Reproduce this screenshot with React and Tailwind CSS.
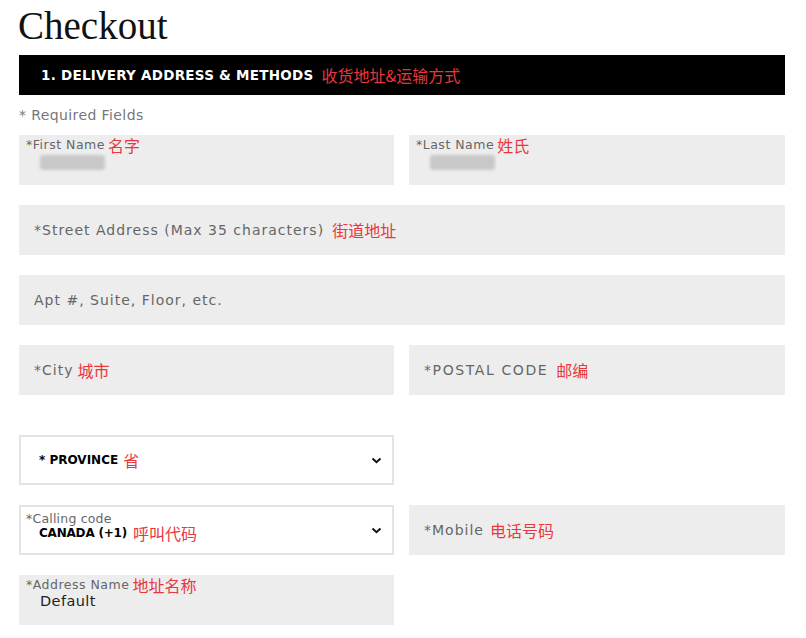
import React from "react";

const sans = "font-['DejaVu_Sans','Noto_Sans_CJK_SC',sans-serif]";

function Cn({ children, className = "" }) {
  return (
    <span className={`text-[#e8383d] text-[16px] font-normal tracking-normal font-['Noto_Sans_CJK_SC',sans-serif] ${className}`}>
      {children}
    </span>
  );
}

function Chevron() {
  return (
    <svg width="11" height="7" viewBox="0 0 11 7" className="shrink-0">
      <path d="M1.5 1.5 L5.5 5.2 L9.5 1.5" fill="none" stroke="#111" strokeWidth="2" />
    </svg>
  );
}

function Field({ children, className = "" }) {
  return (
    <div className={`h-[50px] bg-[#ededed] flex items-center pl-[15px] text-[14px] text-[#666] tracking-[1px] ${className}`}>
      {children}
    </div>
  );
}

function FloatField({ label, cn, children }) {
  return (
    <div className="h-[50px] bg-[#ededed] pl-[7px] pt-[1px]">
      <div className="flex items-center leading-[18px]">
        <span className="text-[12.5px] text-[#666] tracking-[0.5px]">{label}</span>
        <Cn className="ml-[3px]">{cn}</Cn>
      </div>
      <div className="pl-[14px]">{children}</div>
    </div>
  );
}

function Blur() {
  return <div className="mt-[1px] h-[15px] w-[65px] rounded-[3px] bg-[#c8c8c8] blur-[1.5px]" />;
}

export default function App() {
  return (
    <div className={`w-[806px] h-[638px] bg-white ${sans} overflow-hidden`}>
      <div className="w-[766px] ml-[19px]">
        <h1 className="font-['Liberation_Serif',serif] text-[39px] leading-[48px] text-[#111] pt-[2px] -ml-[1px]">
          Checkout
        </h1>
        <div className="mt-[5px] h-[40px] bg-black flex items-center pl-[22px]">
          <span className="text-white text-[13.5px] font-bold tracking-[0.25px]">
            1. DELIVERY ADDRESS &amp; METHODS
          </span>
          <Cn className="ml-[8px]">收货地址&amp;运输方式</Cn>
        </div>
        <div className="mt-[10px] text-[14px] text-[#777] tracking-[0.4px] leading-[20px]">
          * Required Fields
        </div>

        <div className="mt-[10px] grid grid-cols-[375px_376px] gap-x-[15px] gap-y-[20px]">
          <FloatField label="*First Name" cn="名字">
            <Blur />
          </FloatField>
          <FloatField label="*Last Name" cn="姓氏">
            <Blur />
          </FloatField>

          <Field className="col-span-2">
            *Street Address (Max 35 characters)<Cn className="ml-[8px]">街道地址</Cn>
          </Field>
          <Field className="col-span-2">Apt #, Suite, Floor, etc.</Field>

          <Field>
            *City<Cn className="ml-[4px]">城市</Cn>
          </Field>
          <Field>
            <span className="tracking-[1.6px]">*POSTAL CODE</span>
            <Cn className="ml-[8px]">邮编</Cn>
          </Field>

          <div className="mt-[20px] h-[50px] border-2 border-[#e4e4e4] flex items-center pl-[18px] pr-[10px]">
            <span className="text-[12px] font-bold text-black tracking-[0px]">* PROVINCE</span>
            <Cn className="ml-[5px]">省</Cn>
            <div className="flex-1" />
            <Chevron />
          </div>
          <div />

          <div className="h-[50px] border-2 border-[#e4e4e4] flex items-center pl-[5px] pr-[10px]">
            <div className="flex flex-col -mt-[6px]">
              <span className="text-[12.5px] text-[#666] tracking-[0.2px] leading-[12px]">*Calling code</span>
              <div className="flex items-center pl-[13px] leading-[16px]">
                <span className="text-[12px] font-bold text-black tracking-[-0.2px]">CANADA (+1)</span>
                <Cn className="ml-[6px]">呼叫代码</Cn>
              </div>
            </div>
            <div className="flex-1" />
            <Chevron />
          </div>
          <Field>
            *Mobile<Cn className="ml-[6px]">电话号码</Cn>
          </Field>

          <FloatField label="*Address Name" cn="地址名称">
            <div className="text-[14.5px] text-[#222] tracking-[0.4px] leading-[14px]">Default</div>
          </FloatField>
        </div>
      </div>
    </div>
  );
}
